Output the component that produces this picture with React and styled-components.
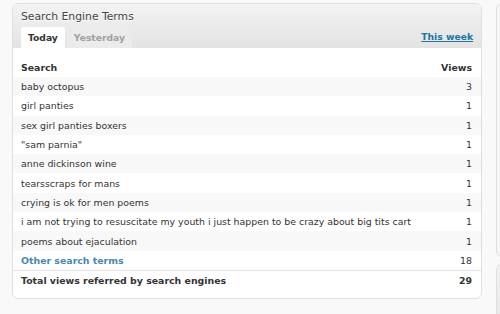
import React from 'react'
import styled, { createGlobalStyle } from 'styled-components'

const GlobalStyle = createGlobalStyle`
  html, body {
    margin: 0;
    padding: 0;
    background: #f9f9f9;
    overflow: hidden;
  }
  body {
    font-family: 'DejaVu Sans', 'Liberation Sans', sans-serif;
    color: #333;
  }
`

const terms = [
  { term: 'baby octopus', views: 3 },
  { term: 'girl panties', views: 1 },
  { term: 'sex girl panties boxers', views: 1 },
  { term: '"sam parnia"', views: 1 },
  { term: 'anne dickinson wine', views: 1 },
  { term: 'tearsscraps for mans', views: 1 },
  { term: 'crying is ok for men poems', views: 1 },
  { term: 'i am not trying to resuscitate my youth i just happen to be crazy about big tits cart', views: 1 },
  { term: 'poems about ejaculation', views: 1 },
]

const App = () => {
  return (
    <>
      <GlobalStyle />
      <Page>
        <MainColumn>
          <Widget>
            <WidgetHeader>
              <Title>Search Engine Terms</Title>
              <TabBar>
                <Tab active>Today</Tab>
                <Tab>Yesterday</Tab>
                <WeekLink href='#'>This week</WeekLink>
              </TabBar>
            </WidgetHeader>
            <Table>
              <thead>
                <tr>
                  <HeadCell>Search</HeadCell>
                  <HeadCell numeric>Views</HeadCell>
                </tr>
              </thead>
              <tbody>
                {terms.map((item, i) => (
                  <Row key={i} alt={i % 2 === 0}>
                    <Cell>{item.term}</Cell>
                    <Cell numeric>{item.views}</Cell>
                  </Row>
                ))}
                <Row>
                  <Cell>
                    <OtherLink href='#'>Other search terms</OtherLink>
                  </Cell>
                  <Cell numeric>18</Cell>
                </Row>
                <TotalRow>
                  <Cell>Total views referred by search engines</Cell>
                  <Cell numeric>29</Cell>
                </TotalRow>
              </tbody>
            </Table>
          </Widget>
        </MainColumn>
        <SideColumn>
          <SideBox height='252px' />
          <SideBox height='80px' header />
        </SideColumn>
      </Page>
    </>
  )
}

const Page = styled.div`
  display: flex;
  gap: 14px;
  padding: 3px 0 0 12px;
  width: 500px;
  height: 314px;
  box-sizing: border-box;
  overflow: hidden;
`

const MainColumn = styled.div`
  width: 470px;
  flex: none;
`

const SideColumn = styled.div`
  display: flex;
  flex-direction: column;
  gap: 7px;
  width: 200px;
  flex: none;
`

const SideBox = styled.div`
  height: ${(p) => p.height};
  flex: none;
  border: 1px solid #dfdfdf;
  border-radius: 6px;
  background: ${(p) => (p.header ? 'linear-gradient(#f2f2f2, #e3e3e3)' : '#f6f6f6')};
`

const Widget = styled.div`
  border: 1px solid #dfdfdf;
  border-radius: 6px;
  background: #fff;
  overflow: hidden;
  padding-bottom: 8px;
`

const WidgetHeader = styled.div`
  background: linear-gradient(#f3f3f3, #e3e3e3);
  padding: 6px 8px 0;
`

const Title = styled.h3`
  margin: 0;
  font-size: 10.8px;
  font-weight: normal;
  color: #444;
  line-height: 13px;
  text-shadow: 0 1px 0 #fff;
`

const TabBar = styled.div`
  display: flex;
  align-items: flex-end;
  gap: 2px;
  margin-top: 3px;
`

const Tab = styled.div`
  height: 21px;
  line-height: 22px;
  padding: 0 7px;
  font-size: 9.2px;
  font-weight: bold;
  color: ${(p) => (p.active ? '#333' : '#a0a0a0')};
  background: ${(p) => (p.active ? '#fff' : '#ebebeb')};
  border-radius: 3px 3px 0 0;
`

const WeekLink = styled.a`
  margin-left: auto;
  margin-right: 0;
  font-size: 9.2px;
  font-weight: bold;
  color: #21759b;
  line-height: 22px;
  text-decoration: underline;
`

const Table = styled.table`
  width: 100%;
  border-collapse: collapse;
  font-size: 9.4px;
  margin-top: 9px;
`

const HeadCell = styled.th`
  text-align: ${(p) => (p.numeric ? 'right' : 'left')};
  font-weight: bold;
  height: 20px;
  padding: ${(p) => (p.numeric ? '0 9px 0 0' : '0 0 0 8px')};
  color: #333;
`

const Row = styled.tr`
  background: ${(p) => (p.alt ? '#f8f8f8' : '#fff')};
`

const TotalRow = styled.tr`
  border-top: 1px solid #e4e4e4;
  font-weight: bold;
`

const Cell = styled.td`
  height: 19.3px;
  padding: ${(p) => (p.numeric ? '0 9px 0 0' : '0 0 0 8px')};
  text-align: ${(p) => (p.numeric ? 'right' : 'left')};
  white-space: nowrap;
  vertical-align: middle;
`

const OtherLink = styled.a`
  color: #4a87b0;
  font-weight: bold;
  text-decoration: none;
`

export default App
